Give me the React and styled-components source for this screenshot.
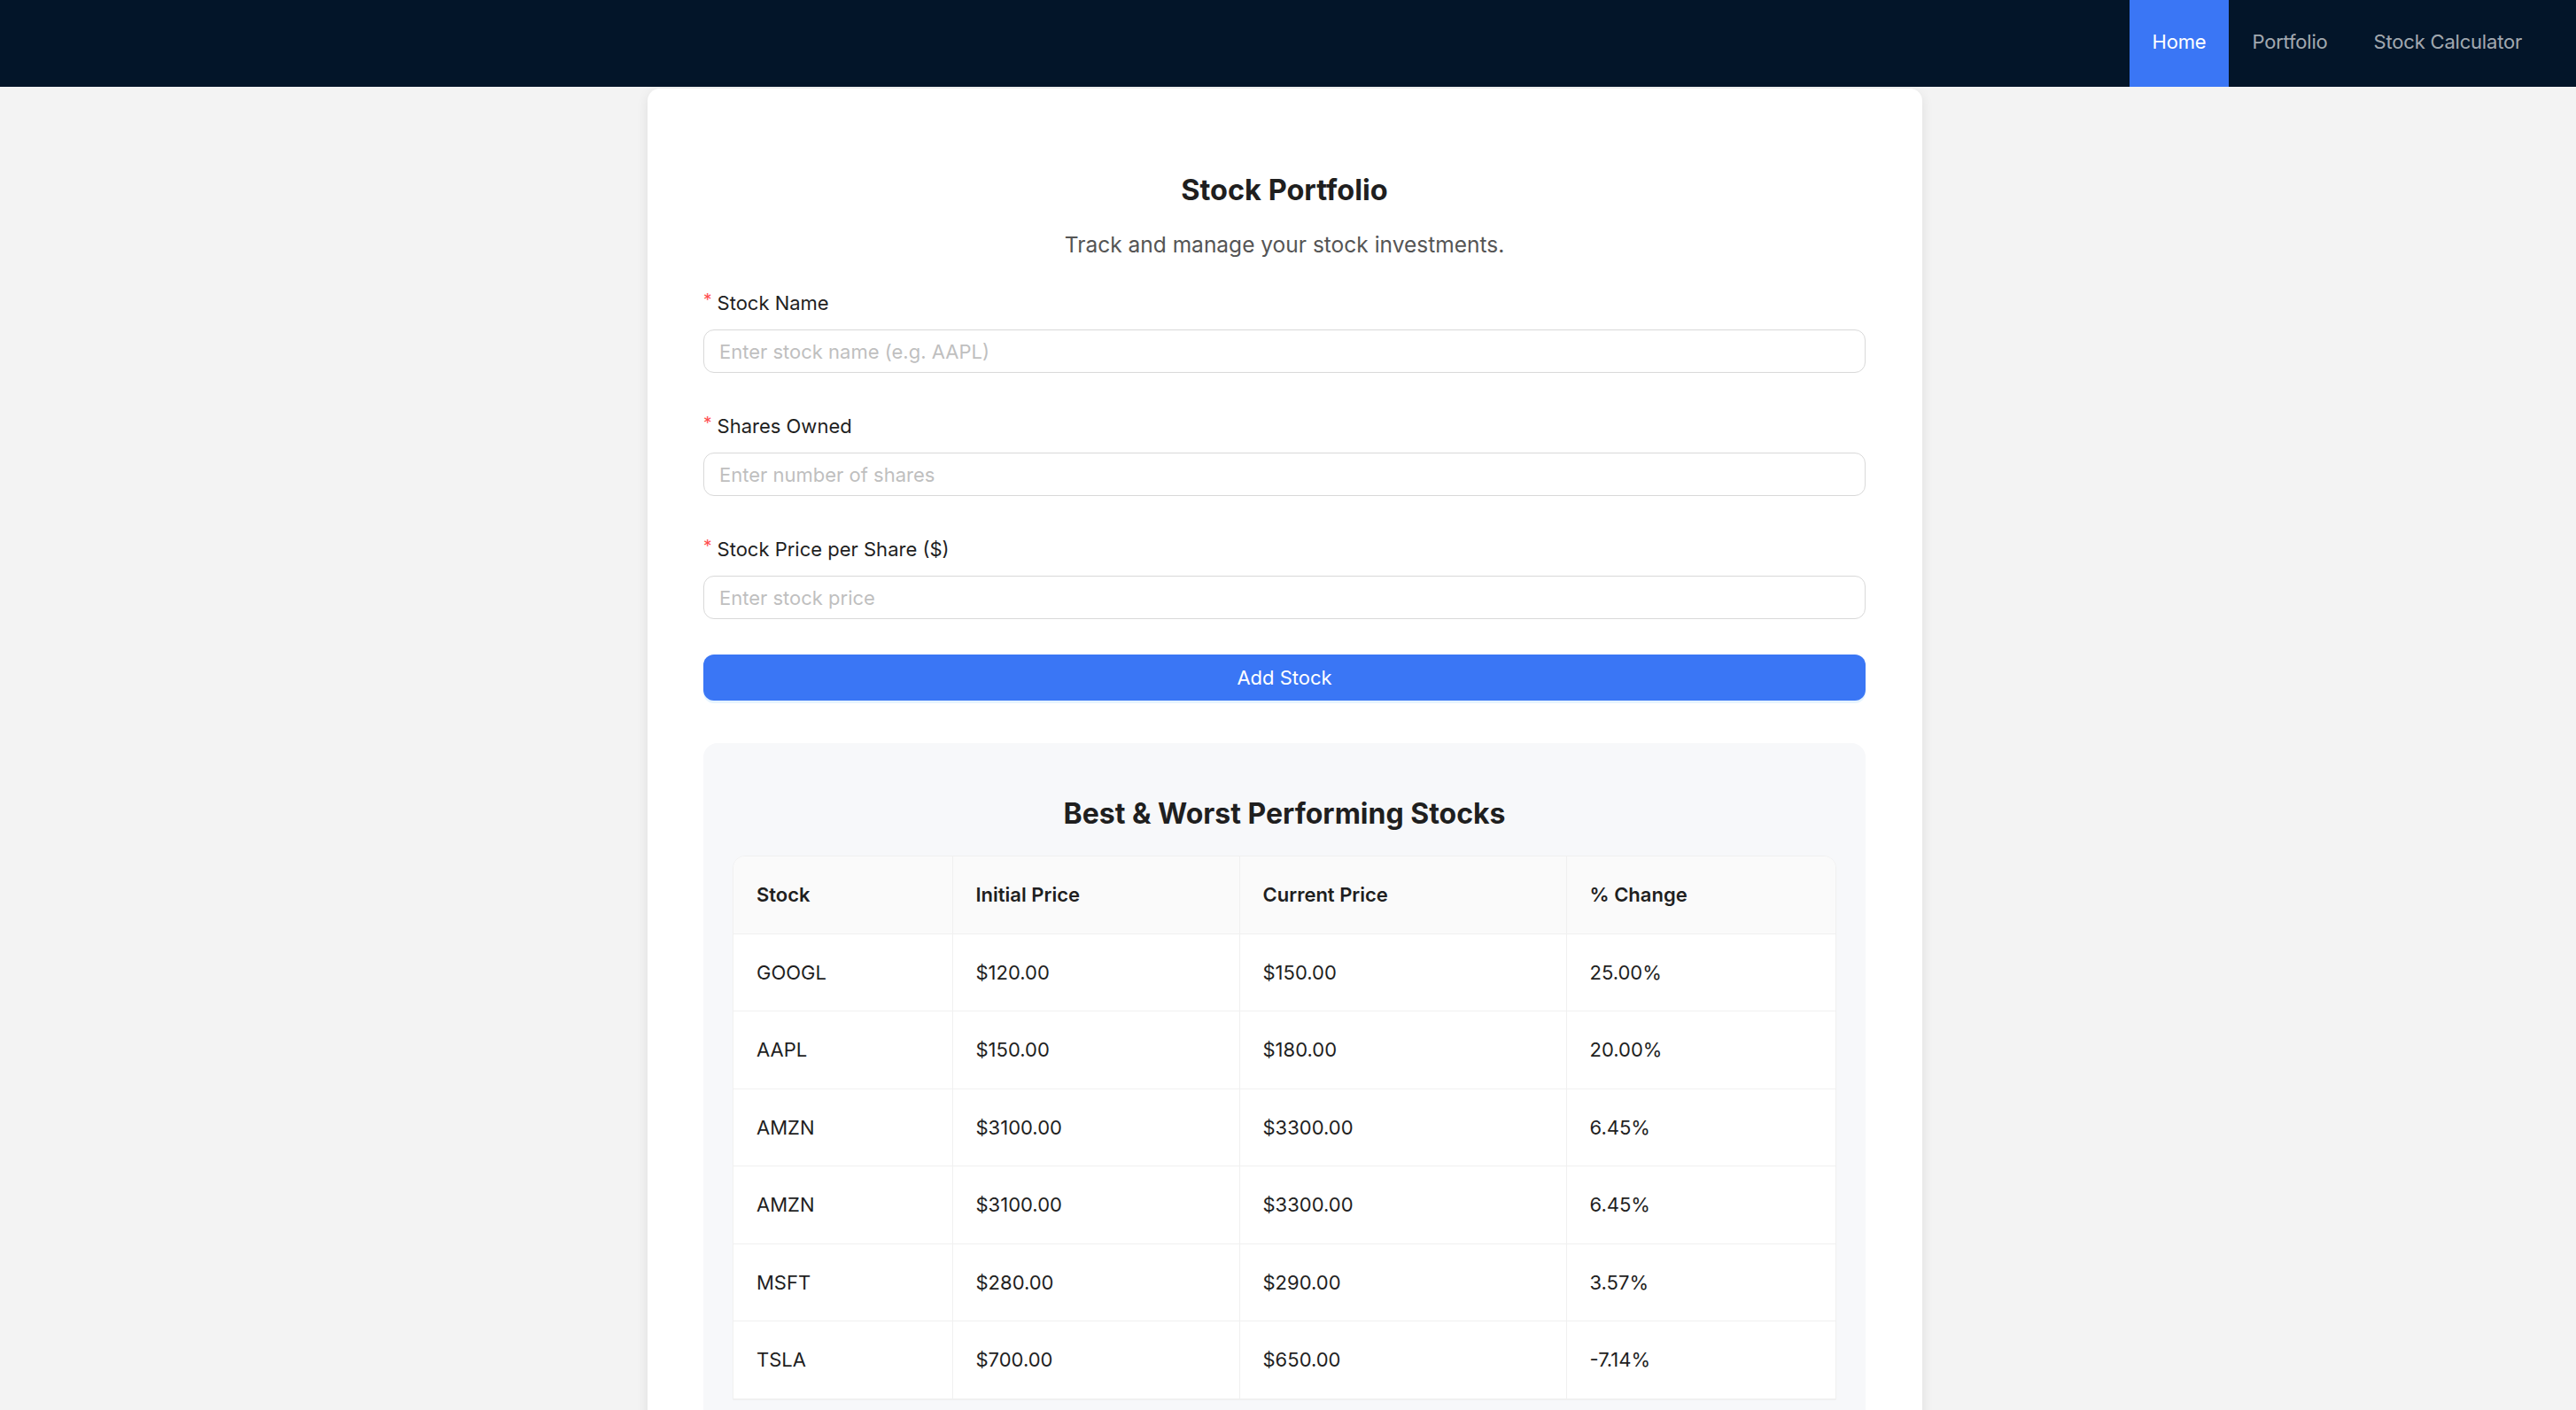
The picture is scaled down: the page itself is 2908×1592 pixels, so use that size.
import React from "react";
import styled, { createGlobalStyle } from "styled-components";

const GlobalStyle = createGlobalStyle`
  html, body {
    margin: 0;
    padding: 0;
    background: #f3f3f3;
    font-family: Inter, "Noto Sans", "Liberation Sans", sans-serif;
    color: rgba(0, 0, 0, 0.88);
  }
  * { box-sizing: border-box; }
`;

const Page = styled.div`
  min-height: 1592px;
  display: flex;
  flex-direction: column;
`;

const Header = styled.header`
  height: 98px;
  background: #031529;
  display: flex;
  justify-content: flex-end;
  padding-right: 35px;
`;

const Nav = styled.nav`
  display: flex;
  align-items: stretch;
`;

const NavItem = styled.a`
  display: flex;
  align-items: center;
  padding: 0 26px 4px;
  font-size: 22px;
  letter-spacing: -0.2px;
  cursor: pointer;
  color: ${(p) => (p.$active ? "#ffffff" : "rgba(255,255,255,0.65)")};
  background: ${(p) => (p.$active ? "#3a76f5" : "transparent")};
`;

const Main = styled.main`
  display: flex;
  justify-content: center;
  padding: 2px 7px 0 0;
`;

const Card = styled.section`
  width: 1439px;
  background: #ffffff;
  border-radius: 14px 14px 0 0;
  box-shadow: 0 4px 14px rgba(0, 0, 0, 0.09);
  padding: 95px 64px 0 63px;
  display: flex;
  flex-direction: column;
`;

const Title = styled.h1`
  margin: 0;
  font-size: 32.5px;
  line-height: 40px;
  font-weight: 700;
  text-align: center;
  color: #1f1f1f;
`;

const Subtitle = styled.p`
  margin: 23px 0 0;
  font-size: 24.5px;
  line-height: 36px;
  text-align: center;
  color: #555555;
`;

const Form = styled.form`
  margin-top: 28px;
  display: flex;
  flex-direction: column;
`;

const Field = styled.div`
  display: flex;
  flex-direction: column;
  margin-bottom: 40px;
`;

const Label = styled.label`
  font-size: 22px;
  line-height: 40px;
  margin-bottom: 10px;
  color: #1f1f1f;
  display: flex;
  align-items: center;
`;

const Star = styled.span`
  color: #ff4d4f;
  font-size: 19px;
  margin-right: 6px;
  align-self: flex-start;
  line-height: 34px;
`;

const Input = styled.input`
  height: 49px;
  border: 1.5px solid #d9d9d9;
  border-radius: 12px;
  padding: 0 17px;
  font-family: inherit;
  font-size: 22px;
  color: #1f1f1f;
  background: #fff;
  outline: none;
  &::placeholder {
    color: #bfbfbf;
  }
`;

const Button = styled.button`
  height: 52px;
  border: none;
  border-radius: 12px;
  background: #3a76f5;
  color: #ffffff;
  font-family: inherit;
  font-size: 22px;
  box-shadow: 0 3px 0 rgba(5, 145, 255, 0.1);
  cursor: pointer;
`;

const Panel = styled.div`
  margin-top: 48px;
  background: #f7f8fa;
  border-radius: 16px 16px 0 0;
  padding: 60px 33px 33px;
`;

const PanelTitle = styled.h2`
  margin: 0;
  font-size: 32px;
  line-height: 40px;
  font-weight: 700;
  text-align: center;
  color: #1f1f1f;
`;

const TableWrap = styled.div`
  margin-top: 27px;
  border: 1.5px solid #f0f0f0;
  border-radius: 14px 14px 0 0;
  overflow: hidden;
  background: #fff;
`;

const Table = styled.table`
  width: 100%;
  border-collapse: collapse;
  table-layout: fixed;
  font-size: 22px;
`;

const Col = styled.col`
  width: ${(p) => p.$w}px;
`;

const Th = styled.th`
  height: 87px;
  padding: 0 26px;
  text-align: left;
  font-weight: 600;
  background: #fafafa;
  color: #1f1f1f;
  border-bottom: 1.5px solid #f0f0f0;
  border-right: 1.5px solid #f0f0f0;
  &:last-child { border-right: none; }
`;

const Td = styled.td`
  height: 87.5px;
  padding: 0 26px;
  color: #1f1f1f;
  border-bottom: 1.5px solid #f0f0f0;
  border-right: 1.5px solid #f0f0f0;
  &:last-child { border-right: none; }
`;

const rows = [
  ["GOOGL", "$120.00", "$150.00", "25.00%"],
  ["AAPL", "$150.00", "$180.00", "20.00%"],
  ["AMZN", "$3100.00", "$3300.00", "6.45%"],
  ["AMZN", "$3100.00", "$3300.00", "6.45%"],
  ["MSFT", "$280.00", "$290.00", "3.57%"],
  ["TSLA", "$700.00", "$650.00", "-7.14%"],
];

const fields = [
  { label: "Stock Name", placeholder: "Enter stock name (e.g. AAPL)" },
  { label: "Shares Owned", placeholder: "Enter number of shares" },
  { label: "Stock Price per Share ($)", placeholder: "Enter stock price" },
];

export default function App() {
  return (
    <>
      <GlobalStyle />
      <Page>
        <Header>
          <Nav>
            <NavItem $active>Home</NavItem>
            <NavItem>Portfolio</NavItem>
            <NavItem>Stock Calculator</NavItem>
          </Nav>
        </Header>
        <Main>
          <Card>
            <Title>Stock Portfolio</Title>
            <Subtitle>Track and manage your stock investments.</Subtitle>
            <Form onSubmit={(e) => e.preventDefault()}>
              {fields.map((f) => (
                <Field key={f.label}>
                  <Label>
                    <Star>*</Star>
                    {f.label}
                  </Label>
                  <Input placeholder={f.placeholder} />
                </Field>
              ))}
              <Button type="submit">Add Stock</Button>
            </Form>
            <Panel>
              <PanelTitle>Best &amp; Worst Performing Stocks</PanelTitle>
              <TableWrap>
                <Table>
                  <colgroup>
                    <Col $w={247} />
                    <Col $w={324} />
                    <Col $w={369} />
                    <Col $w={306} />
                  </colgroup>
                  <thead>
                    <tr>
                      <Th>Stock</Th>
                      <Th>Initial Price</Th>
                      <Th>Current Price</Th>
                      <Th>% Change</Th>
                    </tr>
                  </thead>
                  <tbody>
                    {rows.map((r, i) => (
                      <tr key={i}>
                        {r.map((c, j) => (
                          <Td key={j}>{c}</Td>
                        ))}
                      </tr>
                    ))}
                  </tbody>
                </Table>
              </TableWrap>
            </Panel>
          </Card>
        </Main>
      </Page>
    </>
  );
}
